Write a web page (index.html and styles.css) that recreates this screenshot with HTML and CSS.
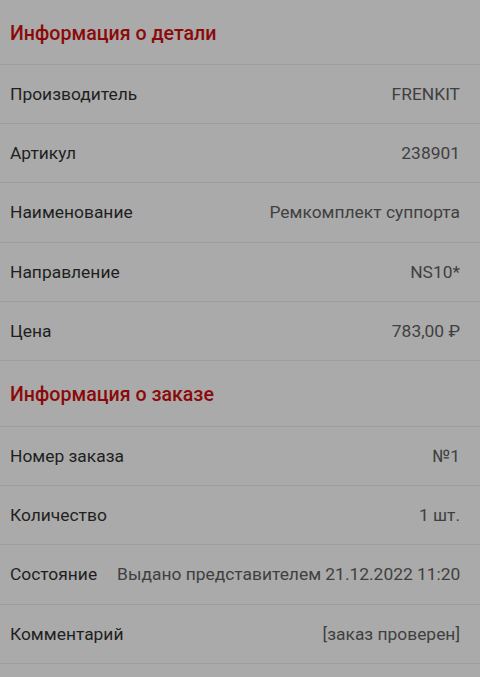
FILE: index.html
```html
<!DOCTYPE html>
<html lang="ru">
<head>
    <meta charset="UTF-8">
    <meta name="viewport" content="width=device-width, initial-scale=1.0">
    <title>Информация о детали</title>
    <link rel="stylesheet" href="styles.css">
</head>
<body>
    <div class="sheet">
        <h2 class="section-title">Информация о детали</h2>
        <div class="row"><span class="label">Производитель</span><span class="value">FRENKIT</span></div>
        <div class="row"><span class="label">Артикул</span><span class="value">238901</span></div>
        <div class="row"><span class="label">Наименование</span><span class="value">Ремкомплект суппорта</span></div>
        <div class="row"><span class="label">Направление</span><span class="value">NS10*</span></div>
        <div class="row"><span class="label">Цена</span><span class="value">783,00 ₽</span></div>

        <h2 class="section-title">Информация о заказе</h2>
        <div class="row"><span class="label">Номер заказа</span><span class="value">№1</span></div>
        <div class="row"><span class="label">Количество</span><span class="value">1 шт.</span></div>
        <div class="row"><span class="label">Состояние</span><span class="value">Выдано представителем 21.12.2022 11:20</span></div>
        <div class="row"><span class="label">Комментарий</span><span class="value">[заказ проверен]</span></div>
    </div>
</body>
</html>
```

FILE: styles.css
```css
body {
    margin: 0;
    padding: 0;
    background-color: #aaaaaa; /* dimmed backdrop */
    font-family: Roboto, "Noto Sans", sans-serif;
}

.sheet {
    display: flex;
    flex-direction: column;
    margin-top: -1px; /* sheet is scrolled up a pixel */
}

.section-title {
    margin: 0;
    flex: none;
    box-sizing: border-box;
    height: 66px;
    padding: 3px 20px 0 10px;
    display: flex;
    align-items: center;
    font-size: 19.6px;
    font-weight: 500;
    color: #8a0a0a;
    border-bottom: 1px solid #9e9e9e;
}

.row {
    flex: none;
    height: 58.2px;
    padding: 0 20px 0 10px;
    display: flex;
    align-items: center;
    justify-content: space-between;
    gap: 20px;
    font-size: 17.4px;
    border-bottom: 1px solid #9e9e9e;
}

.label {
    color: #1f1f1f;
    white-space: nowrap;
}

.value {
    color: #404040;
    text-align: right;
    white-space: nowrap;
}
```
